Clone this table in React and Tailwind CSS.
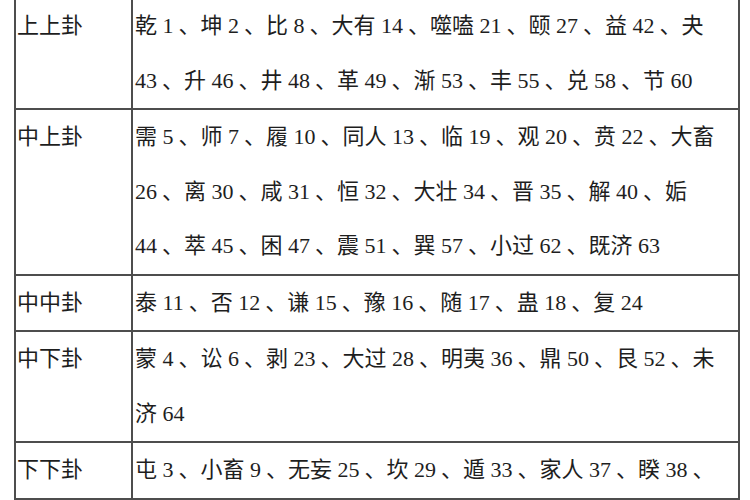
import React from "react";

const rows = [
  {
    name: "上上卦",
    lines: [
      "乾 1、坤 2、比 8、大有 14、噬嗑 21、颐 27、益 42、夬",
      "43、升 46、井 48、革 49、渐 53、丰 55、兑 58、节 60",
    ],
  },
  {
    name: "中上卦",
    lines: [
      "需 5、师 7、履 10、同人 13、临 19、观 20、贲 22、大畜",
      "26、离 30、咸 31、恒 32、大壮 34、晋 35、解 40、姤",
      "44、萃 45、困 47、震 51、巽 57、小过 62、既济 63",
    ],
  },
  {
    name: "中中卦",
    lines: ["泰 11、否 12、谦 15、豫 16、随 17、蛊 18、复 24"],
  },
  {
    name: "中下卦",
    lines: [
      "蒙 4、讼 6、剥 23、大过 28、明夷 36、鼎 50、艮 52、未",
      "济 64",
    ],
  },
  {
    name: "下下卦",
    lines: ["屯 3、小畜 9、无妄 25、坎 29、遁 33、家人 37、睽 38、"],
  },
];

// numbers sit a little apart from the 、 that follows them, as in the Word table
const Line = ({ text }) => {
  const parts = text.split(/(\d+)/);
  return (
    <div className="whitespace-nowrap">
      {parts.map((p, i) =>
        /^\d+$/.test(p) ? (
          <span key={i} className={parts[i + 1]?.startsWith("、") ? "mr-[5px]" : ""}>
            {p}
          </span>
        ) : (
          <span key={i}>{p}</span>
        )
      )}
    </div>
  );
};

export default function App() {
  return (
    <div className="w-[750px] h-[500px] overflow-hidden bg-white pl-[14px]">
      <div
        className="-mt-[3px] w-[726px] border-2 border-[#4d4d4d] text-[22px] leading-[54.5px] text-[#1e1e1e]"
        style={{ fontFamily: '"Liberation Serif", "Noto Sans CJK SC", serif' }}
      >
        {rows.map((row) => (
          <div key={row.name} className="flex border-b-2 border-[#4d4d4d]">
            <div className="w-[117px] shrink-0 border-r-2 border-[#4d4d4d] pl-[1px]">
              {row.name}
            </div>
            <div className="flex-1 pl-[2px]">
              {row.lines.map((line, i) => (
                <Line key={i} text={line} />
              ))}
            </div>
          </div>
        ))}
      </div>
    </div>
  );
}
